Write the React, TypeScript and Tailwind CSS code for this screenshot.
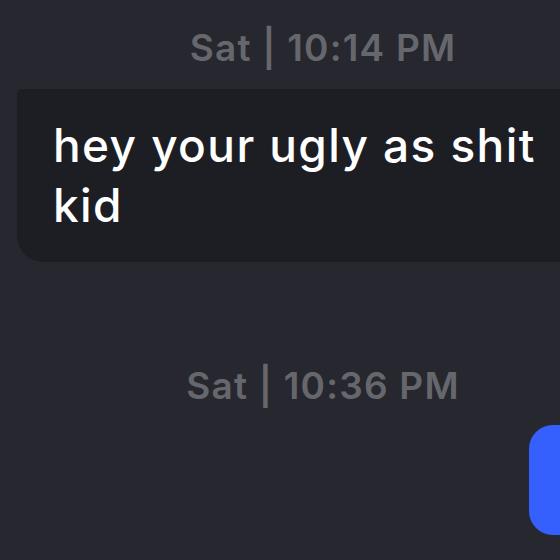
export default function App() {
  return (
    <div className="w-[560px] h-[560px] overflow-hidden bg-[#27282f] flex flex-col" style={{ fontFamily: "Inter, 'Noto Sans', sans-serif" }}>
      <div className="pt-[30px] h-[66px] pl-[86px] flex justify-center text-[37px] leading-[36px] tracking-[1.2px] font-semibold text-[#66676d] whitespace-nowrap">
        Sat | 10:14 PM
      </div>
      <div className="mt-[23px] ml-[17px] w-[600px] shrink-0 bg-[#1d1e23] rounded-tl-[5px] rounded-bl-[26px] pt-[26px] pb-[27px] pl-[36px] text-white text-[46px] leading-[60px] tracking-[1.4px] font-medium whitespace-nowrap">
        <div>hey your ugly as shit</div>
        <div>kid</div>
      </div>
      <div className="mt-[106px] h-[36px] pl-[86px] flex justify-center text-[37px] leading-[36px] tracking-[1.2px] font-semibold text-[#66676d] whitespace-nowrap">
        Sat | 10:36 PM
      </div>
      <div className="mt-[21px] ml-[529px] w-[100px] h-[110px] shrink-0 bg-[#3660fd] rounded-l-[24px]" />
    </div>
  );
}
